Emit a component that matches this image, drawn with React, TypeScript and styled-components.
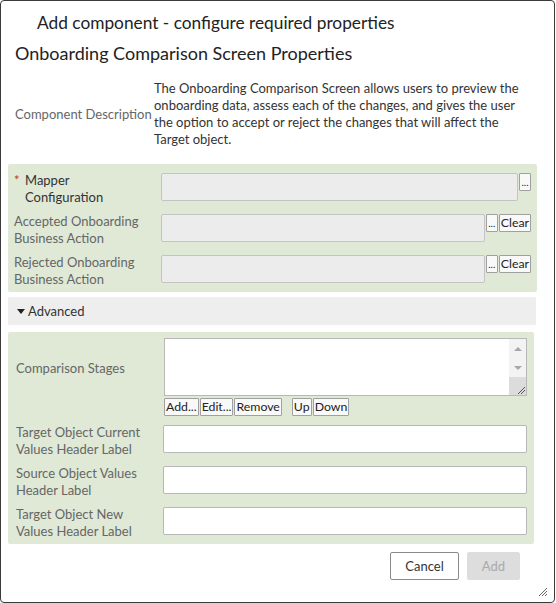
import React from "react";
import styled, { createGlobalStyle } from "styled-components";

const Global = createGlobalStyle`
  html, body { margin: 0; padding: 0; background: #fff; }
  body { font-family: Lato, "Open Sans", sans-serif; color: #333; }
  * { box-sizing: border-box; }
`;

const Dialog = styled.div`
  position: relative;
  width: 555px;
  height: 603px;
  border: 1px solid #3a3a3a;
  border-radius: 4px;
  display: flex;
  flex-direction: column;
  background: #fff;
`;

const Title = styled.h1`
  margin: 0;
  padding: 11px 0 0 36px;
  font-size: 17.3px;
  line-height: 22px;
  font-weight: 400;
  color: #222;
`;

const Subtitle = styled.h2`
  margin: 8px 0 0 14px;
  font-size: 18px;
  line-height: 22px;
  font-weight: 400;
  color: #222;
`;

const DescRow = styled.div`
  display: grid;
  grid-template-columns: 139px 1fr;
  align-items: center;
  margin: 16px 14px 0 14px;
`;

const DescLabel = styled.div`
  font-size: 13px;
  color: #666;
`;

const DescText = styled.div`
  font-size: 13px;
  line-height: 17px;
  color: #333;
  padding-right: 8px;
`;

const Panel = styled.div<{ $pl: number; $pr: number; $pt: number }>`
  background: #dfe9d6;
  display: flex;
  flex-direction: column;
  gap: 3px;
  padding: ${(p) => p.$pt}px ${(p) => p.$pr}px 4px ${(p) => p.$pl}px;
  border-radius: 2px;
`;

const TopPanel = styled(Panel)`
  margin: 16px 17px 0 7px;
`;

const Row = styled.div<{ $labelW: number }>`
  display: grid;
  grid-template-columns: ${(p) => p.$labelW}px 1fr;
  align-items: center;
`;

const Label = styled.div<{ $dark?: boolean; $top?: number }>`
  font-size: 13px;
  line-height: 17px;
  padding-top: 4px;
  color: ${(p) => (p.$dark ? "#333" : "#666")};
  display: flex;
  ${(p) => (p.$top !== undefined ? `align-self: start; padding-top: ${p.$top}px;` : "")}
`;

const Star = styled.span`
  color: #c0392b;
  width: 11px;
  flex: none;
`;

const Field = styled.div`
  display: flex;
  align-items: flex-start;
  gap: 1px;
`;

const ReadInput = styled.div`
  flex: 1;
  height: 28px;
  background: #ececec;
  border: 1px solid #c4c4c4;
  border-radius: 2px;
`;

const TextInput = styled.div`
  height: 28px;
  background: #fff;
  border: 1px solid #b8b8b8;
  border-radius: 2px;
`;

const SmallBtn = styled.button`
  height: 18px;
  padding: 0 1px;
  margin: 0;
  font-family: inherit;
  font-size: 12.3px;
  line-height: 16px;
  color: #222;
  background: #f9f9f9;
  border: 1px solid #a0a0a0;
  border-radius: 1px;
  display: flex;
  align-items: center;
`;

const DotsBtn = styled(SmallBtn)`
  width: 12px;
  padding: 0 0 3px 0;
  justify-content: center;
  font-size: 10px;
  line-height: 10px;
  align-items: flex-end;
`;

const Advanced = styled.div`
  margin: 5px 18px 0 7px;
  display: flex;
  flex-direction: column;
`;

const AdvHeader = styled.div`
  height: 28px;
  background: #eeeeee;
  display: flex;
  align-items: center;
  padding-left: 9px;
  font-size: 13px;
  color: #333;
  gap: 3px;
`;

const AdvBody = styled.div`
  padding-top: 7px;
  padding-right: 2px;
`;

const Tri = styled.span`
  width: 0;
  height: 0;
  border-left: 4px solid transparent;
  border-right: 4px solid transparent;
  border-top: 5px solid #222;
`;

const ListBlock = styled.div`
  display: flex;
  flex-direction: column;
  gap: 2px;
  padding-bottom: 1px;
`;

const ListBox = styled.div`
  height: 58px;
  background: #fff;
  border: 1px solid #b8b8b8;
  display: flex;
  justify-content: flex-end;
`;

const ScrollCol = styled.div`
  width: 17px;
  display: flex;
  flex-direction: column;
  background: #f3f3f3;
`;

const Arrow = styled.div<{ $up?: boolean }>`
  height: 19px;
  display: flex;
  align-items: center;
  justify-content: center;
  &::after {
    content: "";
    border-left: 4px solid transparent;
    border-right: 4px solid transparent;
    ${(p) => (p.$up ? "border-bottom: 4px solid #a8a8a8;" : "border-top: 4px solid #a8a8a8;")}
  }
`;

const Grip = styled.div`
  flex: 1;
  background: #dcdcdc;
  display: flex;
  align-items: flex-end;
  justify-content: flex-end;
`;

const BtnRow = styled.div`
  display: flex;
  gap: 1px;
`;

const Spacer = styled.div`
  width: 8px;
`;

const Footer = styled.div`
  display: flex;
  justify-content: flex-end;
  gap: 8px;
  margin: 8px 34px 0 0;
`;

const FootBtn = styled.button<{ $disabled?: boolean }>`
  height: 28px;
  min-width: 52px;
  padding: 0 14px;
  font-family: inherit;
  font-size: 13px;
  border-radius: 2px;
  border: 1px solid ${(p) => (p.$disabled ? "#dddddd" : "#8a8a8a")};
  background: ${(p) => (p.$disabled ? "#dddddd" : "#fff")};
  color: ${(p) => (p.$disabled ? "#aaa" : "#333")};
`;

const Corner = styled.svg`
  position: absolute;
  right: 6px;
  bottom: 5px;
`;

const GripLines = () => (
  <svg width="10" height="10" viewBox="0 0 10 10">
    <path d="M9 2 L2 9 M9 5 L5 9" stroke="#555" strokeWidth="1" />
  </svg>
);

export default function App() {
  return (
    <>
      <Global />
      <Dialog>
        <Title>Add component - configure required properties</Title>
        <Subtitle>Onboarding Comparison Screen Properties</Subtitle>
        <DescRow>
          <DescLabel>Component Description</DescLabel>
          <DescText>
            The Onboarding Comparison Screen allows users to preview the onboarding data, assess each of the
            changes, and gives the user the option to accept or reject the changes that will affect the Target
            object.
          </DescText>
        </DescRow>
        <TopPanel $pl={6} $pr={6} $pt={4}>
          <Row $labelW={147}>
            <Label $dark>
              <Star>*</Star>
              <span>
                Mapper
                <br />
                Configuration
              </span>
            </Label>
            <Field>
              <ReadInput />
              <DotsBtn>...</DotsBtn>
            </Field>
          </Row>
          <Row $labelW={147}>
            <Label>
              Accepted Onboarding
              <br />
              Business Action
            </Label>
            <Field>
              <ReadInput />
              <DotsBtn>...</DotsBtn>
              <SmallBtn>Clear</SmallBtn>
            </Field>
          </Row>
          <Row $labelW={147}>
            <Label>
              Rejected Onboarding
              <br />
              Business Action
            </Label>
            <Field>
              <ReadInput />
              <DotsBtn>...</DotsBtn>
              <SmallBtn>Clear</SmallBtn>
            </Field>
          </Row>
        </TopPanel>
        <Advanced>
          <AdvHeader>
            <Tri />
            Advanced
          </AdvHeader>
          <AdvBody>
            <Panel $pl={8} $pr={7} $pt={6}>
              <Row $labelW={148}>
                <Label $top={22}>Comparison Stages</Label>
                <ListBlock>
                  <ListBox>
                    <ScrollCol>
                      <Arrow $up />
                      <Arrow />
                      <Grip>
                        <GripLines />
                      </Grip>
                    </ScrollCol>
                  </ListBox>
                  <BtnRow>
                    <SmallBtn>Add...</SmallBtn>
                    <SmallBtn>Edit...</SmallBtn>
                    <SmallBtn>Remove</SmallBtn>
                    <Spacer />
                    <SmallBtn>Up</SmallBtn>
                    <SmallBtn>Down</SmallBtn>
                  </BtnRow>
                </ListBlock>
              </Row>
              <Row $labelW={147}>
                <Label>
                  Target Object Current
                  <br />
                  Values Header Label
                </Label>
                <TextInput />
              </Row>
              <Row $labelW={147}>
                <Label>
                  Source Object Values
                  <br />
                  Header Label
                </Label>
                <TextInput />
              </Row>
              <Row $labelW={147}>
                <Label>
                  Target Object New
                  <br />
                  Values Header Label
                </Label>
                <TextInput />
              </Row>
            </Panel>
          </AdvBody>
        </Advanced>
        <Footer>
          <FootBtn>Cancel</FootBtn>
          <FootBtn $disabled>Add</FootBtn>
        </Footer>
        <Corner width="10" height="10" viewBox="0 0 10 10">
          <path d="M9 1 L1 9 M9 4 L4 9 M9 7 L7 9" stroke="#666" strokeWidth="1" />
        </Corner>
      </Dialog>
    </>
  );
}
